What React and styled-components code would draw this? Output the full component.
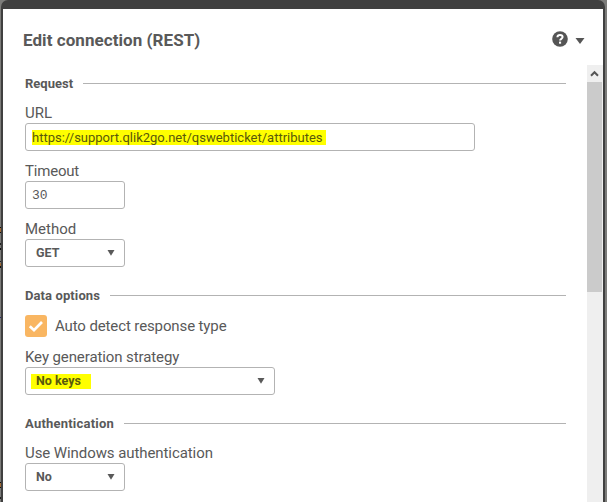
import React from "react";
import styled, { createGlobalStyle } from "styled-components";

const GlobalStyle = createGlobalStyle`
  * { box-sizing: border-box; }
  body { margin: 0; background: #7c7c7a; overflow: hidden; color: #595959; font-family: Roboto, "Liberation Sans", sans-serif; }
`;

const Backdrop = styled.div`
  position: relative;
  width: 607px;
  height: 502px;
  padding: 0 2px 0 1px;
  overflow: hidden;
  background: #7c7c7a;
`;

const PageMark = styled.span`
  position: absolute;
  left: 0;
  top: ${(p) => p.$top}px;
  width: 1px;
  height: ${(p) => p.$height}px;
  background: ${(p) => p.$color};
`;

const Dialog = styled.div`
  height: 520px;
  padding: 9px 2px 0;
  background: #404040;
  border-radius: 7px 7px 0 0;
`;

const Panel = styled.div`
  height: 511px;
  background: #fff;
  display: flex;
  flex-direction: column;
`;

const Header = styled.header`
  height: 56px;
  flex: none;
  display: flex;
  align-items: flex-start;
  padding: 21px 18px 0 20px;
`;

const Title = styled.h1`
  margin: 0;
  flex: 1;
  font-size: 17px;
  line-height: 20px;
  font-weight: 700;
  letter-spacing: ${(p) => p.$spacing}px;
`;

const HelpIcon = styled.svg`
  width: 16px;
  height: 16px;
  margin: 1px 7px 0 0;
  display: block;
`;

const MenuArrow = styled.svg`
  width: 10px;
  height: 6px;
  margin-top: 8px;
  display: block;
`;

const Body = styled.div`
  flex: 1;
  display: flex;
  min-height: 0;
`;

const Content = styled.main`
  flex: 1;
  padding: 9px 21px 0 22px;
`;

const Section = styled.section`
  height: ${(p) => p.$height}px;
`;

const SectionTitle = styled.h2`
  margin: 0;
  height: 20px;
  display: flex;
  align-items: center;
  gap: ${(p) => p.$gap || 10}px;
  font-size: 13px;
  line-height: 20px;
  font-weight: 700;
  letter-spacing: ${(p) => p.$spacing}px;
  &::after {
    content: "";
    flex: 1;
    height: 1px;
    background: #b3b3b3;
    margin-top: -1px;
  }
`;

const Field = styled.div`
  padding-top: ${(p) => p.$top}px;
`;

const Label = styled.label`
  display: block;
  height: 20px;
  font-size: 15px;
  line-height: 20px;
  letter-spacing: ${(p) => p.$spacing || 0}px;
  white-space: nowrap;
`;

const Control = styled.div`
  width: ${(p) => p.$width}px;
  height: 28px;
  border: 1px solid #b3b3b3;
  border-radius: 3px;
  display: flex;
  align-items: center;
  padding: 0 9px 0 ${(p) => p.$left || 6}px;
  font-size: 13px;
  line-height: 15px;
`;

const Address = styled.span`
  background: #ff0;
  color: #59590b;
  height: 15px;
  width: 294px;
  white-space: nowrap;
  letter-spacing: ${(p) => p.$spacing}px;
`;

const Timeout = styled.span`
  font-family: "Liberation Mono", monospace;
  font-size: 13px;
`;

const Choice = styled.span`
  font-weight: 700;
  height: 15px;
  font-size: 12.5px;
  line-height: 14px;
  padding: 0 10px 0 5px;
  margin-right: auto;
  letter-spacing: ${(p) => p.$spacing || 0}px;
  background: ${(p) => (p.$marked ? "#ff0" : "transparent")};
  color: ${(p) => (p.$marked ? "#59590b" : "inherit")};
`;

const SelectArrow = styled.svg`
  width: 8px;
  height: 6px;
  display: block;
`;

const CheckRow = styled.div`
  display: flex;
  align-items: center;
  gap: 8px;
  height: 22px;
  margin-top: 9px;
`;

const CheckBox = styled.span`
  width: 22px;
  height: 22px;
  border-radius: 3px;
  background: #f9b662;
  svg { display: block; }
`;

const Scrollbar = styled.div`
  width: 16px;
  background: #efefef;
  padding-right: 1px;
`;

const ScrollUp = styled.svg`
  width: 15px;
  height: 17px;
  display: block;
`;

const Thumb = styled.div`
  height: 210px;
  background: #cbcbcb;
`;

const pageMarks = [
  { top: 227, height: 1, color: "#111" },
  { top: 228, height: 4, color: "#a06a35" },
  { top: 232, height: 1, color: "#111" },
  { top: 243, height: 2, color: "#222" },
  { top: 248, height: 2, color: "#111" },
  { top: 261, height: 1, color: "#222" },
  { top: 263, height: 3, color: "#a06a35" },
  { top: 266, height: 2, color: "#111" },
  { top: 317, height: 1, color: "#27276a" },
  { top: 482, height: 1, color: "#111" },
  { top: 483, height: 4, color: "#a06a35" },
  { top: 487, height: 1, color: "#111" },
  { top: 497, height: 2, color: "#222" },
];

function Select({ width, children, marked, spacing }) {
  return (
    <Control $width={width} $left={5}>
      <Choice $marked={marked} $spacing={spacing}>{children}</Choice>
      <SelectArrow viewBox="0 0 8 6"><path d="M0.5 0h7L4 5.8z" fill="#595959" /></SelectArrow>
    </Control>
  );
}

export default function App() {
  return (
    <Backdrop>
      <GlobalStyle />
      {pageMarks.map((m) => (
        <PageMark key={m.top} $top={m.top} $height={m.height} $color={m.color} />
      ))}
      <Dialog>
        <Panel>
          <Header>
            <Title $spacing={0.06}>Edit connection (REST)</Title>
            <HelpIcon viewBox="0 0 16 16">
              <circle cx="8" cy="8" r="7.8" fill="#555" />
              <path d="M5.4 6.2C5.5 4.6 6.5 3.9 8 3.9s2.6.8 2.6 2.2c0 1.8-2.5 1.6-2.5 3.4" fill="none" stroke="#fff" strokeWidth="2" />
              <rect x="7" y="10.6" width="2.1" height="2.1" fill="#fff" />
            </HelpIcon>
            <MenuArrow viewBox="0 0 10 6"><path d="M0.5 0h9L5 6z" fill="#555" /></MenuArrow>
          </Header>
          <Body>
            <Content>
              <Section $height={212}>
                <SectionTitle $spacing={0} $gap={10}>Request</SectionTitle>
                <Field $top={9}>
                  <Label>URL</Label>
                  <Control $width={450}>
                    <Address $spacing={0}>https://support.qlik2go.net/qswebticket/attributes</Address>
                  </Control>
                </Field>
                <Field $top={10}>
                  <Label $spacing={-0.2}>Timeout</Label>
                  <Control $width={100}><Timeout>30</Timeout></Control>
                </Field>
                <Field $top={10}>
                  <Label>Method</Label>
                  <Select width={100}>GET</Select>
                </Field>
              </Section>
              <Section $height={128}>
                <SectionTitle $spacing={0.1}>Data options</SectionTitle>
                <CheckRow>
                  <CheckBox>
                    <svg width="22" height="22" viewBox="0 0 22 22">
                      <path d="M4.8 11.2l4.2 4 8-8.2" fill="none" stroke="#fff" strokeWidth="2.7" />
                    </svg>
                  </CheckBox>
                  <Label $spacing={-0.12}>Auto detect response type</Label>
                </CheckRow>
                <Field $top={10}>
                  <Label $spacing={-0.1}>Key generation strategy</Label>
                  <Select width={250} marked>No keys</Select>
                </Field>
              </Section>
              <Section $height={90}>
                <SectionTitle $spacing={0.22}>Authentication</SectionTitle>
                <Field $top={9}>
                  <Label $spacing={-0.08}>Use Windows authentication</Label>
                  <Select width={100}>No</Select>
                </Field>
              </Section>
            </Content>
            <Scrollbar>
              <ScrollUp viewBox="0 0 15 17"><path d="M4 10.7L7.5 7.2l3.5 3.5" fill="none" stroke="#555" strokeWidth="2" /></ScrollUp>
              <Thumb />
            </Scrollbar>
          </Body>
        </Panel>
      </Dialog>
    </Backdrop>
  );
}
